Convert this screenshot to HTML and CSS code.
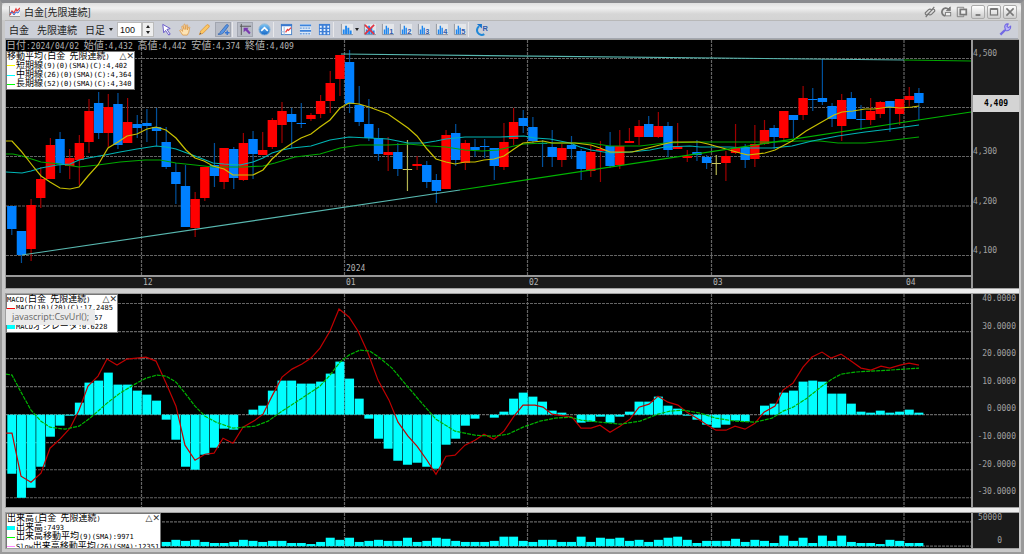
FILE: index.html
```html
<!DOCTYPE html>
<html lang="ja">
<head>
    <meta charset="UTF-8">
    <meta name="viewport" content="width=device-width, initial-scale=1.0">
    <title>白金[先限連続]</title>
    <link rel="stylesheet" href="styles.css">
</head>
<body>
    <!-- Shared icon shapes -->
    <svg class="defs" aria-hidden="true">
        <defs>
            <linearGradient id="blue" x1="0" y1="0" x2="0" y2="1">
                <stop offset="0" stop-color="#7cc4f4"/>
                <stop offset="1" stop-color="#1467c8"/>
            </linearGradient>
            <symbol id="bars" viewBox="0 0 14 14">
                <rect x="1" y="1" width="13" height="12" fill="#e4e6ea"/>
                <path d="M1.5 1v11.5H14" fill="none" stroke="#8a8f98"/>
                <path d="M3 12V7h2v5zM5.500 12V3h2v9zM8 12V5h2v7zM10.500 12V8h2v4z" fill="#1f86ee"/>
            </symbol>
            <symbol id="bars-left" viewBox="0 0 14 14">
                <rect x="1" y="1" width="13" height="12" fill="#e4e6ea"/>
                <path d="M1.5 1v11.5H14" fill="none" stroke="#8a8f98"/>
                <path d="M3 12V7h1.500v5zM5 12V3h1.500v9zM7 12V5h1.500v7z" fill="#1f86ee"/>
            </symbol>
        </defs>
    </svg>

    <div class="window">
        <header class="titlebar">
            <svg class="app-icon" viewBox="0 0 12 12">
                <rect x="1" y="0" width="11" height="11" fill="#f4f4f4"/>
                <path d="M1.5 0v10.500H12" fill="none" stroke="#999"/>
                <path d="M2 9l2-4 2 2 2-4 1 2 3-3" fill="none" stroke="#e23b3b" stroke-width="1.300"/>
                <path d="M2 7l2-1 2 3 2-3 2 1 2-3" fill="none" stroke="#3f72d8"/>
            </svg>
            <h1>白金[先限連続]</h1>
            <div class="title-tools">
                <button class="plain" aria-label="リンク">
                    <svg viewBox="0 0 14 14" fill="none" stroke="#777" stroke-width="1.400">
                        <path d="M6 8L3.500 10.500a2 2 0 0 1-2-2.500L5 4.500a3 3 0 0 1 4 0M8 6l2.500-2.500a2 2 0 0 1 2 2.500L9 9.500a3 3 0 0 1-4 0M2 13L12 1"/>
                    </svg>
                </button>
                <button class="plain" aria-label="更新">
                    <svg viewBox="0 0 14 14" fill="none" stroke="#777">
                        <path d="M6 11.500A4.500 4.500 0 1 1 10 4" stroke-width="2"/>
                        <path d="M12 1v4.500H7.500z" fill="#777"/>
                        <rect x="6.500" y="7.500" width="6" height="4" fill="#eee"/>
                    </svg>
                </button>
                <button class="plain" aria-label="複製">
                    <svg viewBox="0 0 14 14" fill="none" stroke="#777">
                        <path d="M9 3V1.500H1.500v11H9V11"/>
                        <rect x="5" y="4" width="7" height="6" stroke-width="2" fill="#eee"/>
                    </svg>
                </button>
                <button class="win" aria-label="最小化"><svg viewBox="0 0 10 10"><path d="M3 7.500h4" stroke="#777" stroke-width="1.500"/></svg></button>
                <button class="win" aria-label="最大化"><svg viewBox="0 0 10 10"><rect x="2" y="2.500" width="6" height="5" fill="none" stroke="#777"/><path d="M2 2.500h6" stroke="#777" stroke-width="1.600"/></svg></button>
                <button class="win" aria-label="閉じる"><svg viewBox="0 0 10 10"><path d="M2 2l6 6M8 2L2 8" stroke="#777" stroke-width="1.300"/></svg></button>
            </div>
        </header>

        <nav class="toolbar">
            <button class="menu">白金</button>
            <button class="menu">先限連続</button>
            <button class="menu period">日足<i class="caret"></i></button>
            <div class="count">
                <input type="text" value="100" aria-label="本数">
                <div class="spin">
                    <button aria-label="増やす"><i class="up"></i></button>
                    <button aria-label="減らす"><i class="caret"></i></button>
                </div>
            </div>
            <div class="group">
                <button class="tool" aria-label="選択"><svg viewBox="0 0 14 14"><path d="M3 1.500l8 4.500-3.500 1 3.500 5-1.500 1L6 8l-2 2.500z" fill="#fff" stroke="#6354c8"/></svg></button>
                <button class="tool" aria-label="移動"><svg viewBox="0 0 14 14"><path d="M4 13L1 8.500c-.5-1 .8-1.700 1.500-.8L4 9 3 4c0-1 1.200-1 1.500 0l1 3-.3-5c0-1 1.400-1 1.500 0l.6 5 .6-4.500c.2-1 1.500-.8 1.400.2L9 7.500l1.300-3c.5-.8 1.500-.3 1.200.6L10.500 10 9 13z" fill="#fde3b4" stroke="#dc9440" stroke-width=".8"/></svg></button>
                <button class="tool" aria-label="線"><svg viewBox="0 0 14 14"><path d="M1.500 12.500l1.500-4L9.500 2c1-1 3.500 1 2.500 2.300L5.500 11z" fill="#fbc764" stroke="#d99037" stroke-width=".8"/><path d="M1.500 12.500l1-2 1 1z" fill="#555"/></svg></button>
                <button class="tool on" aria-label="描画"><svg viewBox="0 0 14 14"><path d="M1 12c2.500 0 2-3 4-4l5-6c1-1 3 .3 2 1.700L7.500 10C6 12 3 13 1 12z" fill="#5a96e4" stroke="#2559a8" stroke-width=".7"/><path d="M11 8v5M8.500 10.500h5" stroke="#3475d4" stroke-width="1.500"/></svg></button>
            </div>
            <div class="group">
                <button class="tool on" aria-label="カーソル"><svg viewBox="0 0 14 14"><path d="M2.500 1v12M1 3.500h12" stroke="#555" fill="none"/><path d="M5 5h5.500L9 6.500l3.500 4-1.500 1.500-4-4L5 10z" fill="#7a3aae"/></svg></button>
                <button class="tool" aria-label="上へ"><svg viewBox="0 0 14 14"><circle cx="7" cy="7" r="6" fill="url(#blue)" stroke="#8ab5d8"/><path d="M3.500 8.500L7 5l3.500 3.500" fill="none" stroke="#fff" stroke-width="1.600"/></svg></button>
            </div>
            <div class="group">
                <button class="tool" aria-label="チャート"><svg viewBox="0 0 14 14"><rect x="1.500" y="1.500" width="11" height="11" fill="#fff" stroke="#4a83c8"/><path d="M1 2.500h12" stroke="#3878d0" stroke-width="2"/><path d="M6 10l2-3 1 1 3-3" stroke="#e84040" fill="none" stroke-width="1.400"/><path d="M1 9.500h4M4.500 4v9" stroke="#9ab7dc" fill="none"/></svg></button>
                <button class="tool" aria-label="一覧"><svg viewBox="0 0 14 14"><path d="M1 1h12v12H1z" fill="#dce8f6"/><path d="M1 2.500h12M1 8.500h12" stroke="#3d83dc" stroke-width="2"/><path d="M1 5.500h12M1 11.500h12" stroke="#6f9fdc" stroke-width="1.500" stroke-dasharray="2 1"/></svg></button>
                <button class="tool" aria-label="表"><svg viewBox="0 0 14 14"><path d="M1 1h12v12H1z" fill="#3d7fd6"/><path d="M2 3h2v2H2zM6 3h2v2H6zM10 3h2v2h-2zM2 6.500h2v2H2zM6 6.500h2v2H6zM10 6.500h2v2h-2zM2 10h2v2H2zM6 10h2v2H6zM10 10h2v2h-2z" fill="#e8f2ff"/></svg></button>
            </div>
            <div class="group studies">
                <button class="tool" aria-label="指標"><svg><use href="#bars"/></svg></button>
                <button class="drop" aria-label="指標メニュー"><i class="caret"></i></button>
                <button class="tool" aria-label="指標削除"><svg viewBox="0 0 14 14"><use href="#bars" width="14" height="14"/><path d="M2 2l10 10M12 2L2 12" stroke="#e33442" stroke-width="1.800"/></svg></button>
                <button class="tool"><svg viewBox="0 0 14 14"><use href="#bars-left" width="14" height="14"/><text x="9" y="12">1</text></svg></button>
                <button class="tool"><svg viewBox="0 0 14 14"><use href="#bars-left" width="14" height="14"/><text x="9" y="12">2</text></svg></button>
                <button class="tool"><svg viewBox="0 0 14 14"><use href="#bars-left" width="14" height="14"/><text x="9" y="12">3</text></svg></button>
                <button class="tool"><svg viewBox="0 0 14 14"><use href="#bars-left" width="14" height="14"/><text x="9" y="12">4</text></svg></button>
                <button class="tool"><svg viewBox="0 0 14 14"><use href="#bars-left" width="14" height="14"/><text x="9" y="12">5</text></svg></button>
            </div>
            <div class="group">
                <button class="tool" aria-label="リセット"><svg viewBox="0 0 14 14"><path d="M4.500 3.500a5 5 0 1 0 5.500 8.500" fill="none" stroke="#2088d8" stroke-width="2.200"/><path d="M2 1h5.500v5z" fill="#1674cc"/><text x="8" y="9">R</text></svg></button>
            </div>
            <button class="tool settings" aria-label="設定"><svg viewBox="0 0 14 14"><path d="M12.500 3.500L10 5 8.500 3.500 10 1C7 .5 5.500 3 6.500 5.500L7 8c3 1 6-1 5.500-4.500z" fill="#b9b4f8" stroke="#7268e4" stroke-width="1.200"/><path d="M1.500 12.500l5-5" stroke="#7268e4" stroke-width="2.400"/></svg></button>
        </nav>

        <main class="charts">
            <section class="panel price">
                <div class="plot">
                    <svg id="price" viewBox="6 40 965 235" preserveAspectRatio="none"></svg>
                    <p class="quote"><b>日付</b>:2024/04/02 <b>始値</b>:4,432 <b>高値</b>:4,442 <b>安値</b>:4,374 <b>終値</b>:4,409</p>
                    <div class="legend ma">
                        <div><span><b>移動平均</b>(<b>白金</b> <b>先限連続</b>)</span><span class="marks">△✕</span></div>
                        <div><i class="key yellow"></i><span><b>短期線</b>(9)(0)(SMA)(C):4,402</span></div>
                        <div><i class="key cyan"></i><span><b>中期線</b>(26)(0)(SMA)(C):4,364</span></div>
                        <div><i class="key green"></i><span><b>長期線</b>(52)(0)(SMA)(C):4,340</span></div>
                    </div>
                    <div class="months year"><span></span><span></span><span>2024</span></div>
                </div>
                <div class="months dates"><span></span><span>12</span><span>01</span><span>02</span><span>03</span><span>04</span></div>
                <div class="axis prices">
                    <span>4,500</span>
                    <span class="last">4,409</span>
                    <span>4,300</span>
                    <span>4,200</span>
                    <span>4,100</span>
                </div>
            </section>

            <section class="panel macd">
                <div class="plot">
                    <svg id="macd" viewBox="6 294 965 213" preserveAspectRatio="none"></svg>
                    <div class="legend osc">
                        <div><span>MACD(<b>白金</b> <b>先限連続</b>)</span><span class="marks">△✕</span></div>
                        <div><i class="key red"></i><span>MACD(10)(20)(C):17.2485</span></div>
                        <div class="signal">57</div>
                        <div><i class="key block"></i><span>MACD<b>オシレータ</b>:0.6228</span></div>
                    </div>
                    <div class="tip">javascript:CsvUrl();</div>
                </div>
                <div class="axis values">
                    <span>40.0000</span>
                    <span>30.0000</span>
                    <span>20.0000</span>
                    <span>10.0000</span>
                    <span>0.0000</span>
                    <span>-10.0000</span>
                    <span>-20.0000</span>
                    <span>-30.0000</span>
                </div>
            </section>

            <section class="panel volume">
                <div class="plot">
                    <svg id="volume" viewBox="6 514 965 33" preserveAspectRatio="none"></svg>
                    <div class="legend vol">
                        <div><span><b>出来高</b>(<b>白金</b> <b>先限連続</b>)</span><span class="marks">△✕</span></div>
                        <div><i class="key block"></i><span><b>出来高</b>:7493</span></div>
                        <div><i class="key green"></i><span><b>出来高移動平均</b>(9)(SMA):9971</span></div>
                        <div><i class="key pink"></i><span>Slow<b>出来高移動平均</b>(26)(SMA):12351</span></div>
                    </div>
                </div>
                <div class="axis volumes">
                    <span>50000</span>
                    <span>0</span>
                </div>
            </section>
        </main>
    </div>
    <script src="chart.js"></script>
</body>
</html>
```
FILE: styles.css
```css
/* General */
* {
    box-sizing: border-box;
}
body {
    margin: 0;
    background: #b4b4b4;
    font-family: "Noto Sans CJK JP", sans-serif;
    font-size: 10px;
    color: #222;
}
h1, p {
    margin: 0;
    font-weight: normal;
}
button {
    padding: 0;
    border: 0;
    background: none;
    font: inherit;
    color: inherit;
    cursor: pointer;
}
svg {
    display: block;
}
.defs {
    position: absolute;
    width: 0;
    height: 0;
}
.window {
    display: flex;
    flex-direction: column;
    height: 100vh;
    min-height: 400px;
    border: solid #9a9a9a;
    border-width: 3px 3px 2px 2px;
    border-top-color: #8a8b8f;
    background: #c8c8c8;
}

/* Title bar */
.titlebar {
    display: flex;
    align-items: center;
    height: 17px;
    padding: 0 4px 0 6px;
    background: linear-gradient(#e0e0e0, #f0f0f0 30%, #d6d6d6 65%, #d4d4d4);
    border-radius: 4px 4px 0 0;
}
.app-icon {
    width: 12px;
    height: 12px;
}
.titlebar h1 {
    margin-left: 4px;
    font-size: 10px;
    line-height: 16px;
}
.title-tools {
    display: flex;
    align-items: center;
    gap: 2px;
    margin-left: auto;
}
.plain svg {
    width: 14px;
    height: 12px;
}
.win {
    width: 14px;
    height: 14px;
    border: 1px solid #aaa;
    border-radius: 2px;
    background: linear-gradient(#fff, #ccc);
}
.win svg {
    width: 12px;
    height: 12px;
}

/* Toolbar */
.toolbar {
    display: flex;
    align-items: center;
    height: 19px;
    margin: 0 3px;
    padding: 0 4px;
    border-top: 1px solid #b8b8b8;
    border-bottom: 1px solid #a4a8b0;
    background: #cdd0d8;
}
.menu {
    margin-right: 8px;
    font-size: 10px;
    line-height: 16px;
}
.period {
    display: flex;
    align-items: center;
    gap: 4px;
    margin-right: 4px;
}
.caret, .up {
    border: solid transparent;
    border-width: 0 2px;
    border-top: 3px solid #222;
}
.up {
    border-top: 0;
    border-bottom: 3px solid #222;
}
.count {
    display: flex;
    height: 15px;
    margin-right: 3px;
}
.count input {
    width: 25px;
    padding: 0 2px;
    border: 1px solid #bbb;
    background: #fff;
    font: 9px "Liberation Sans", sans-serif;
    color: #111;
}
.spin {
    display: flex;
    flex-direction: column;
    width: 12px;
    border: 1px solid #bbb;
    background: #eee;
}
.spin button {
    display: flex;
    flex: 1;
    align-items: center;
    justify-content: center;
}
.group {
    display: flex;
    gap: 1px;
}
.group + .group {
    padding-left: 3px;
    border-left: 1px solid #e8e8ea;
}
.studies {
    gap: 0;
}
.tool {
    display: flex;
    align-items: center;
    justify-content: center;
    width: 18px;
    height: 15px;
}
.tool.on {
    width: 16px;
    margin: 0 1px;
    border: 1px solid #a2a6b0;
    background: #b8bcc6;
}
.tool svg {
    width: 13px;
    height: 13px;
}
.tool text {
    font: bold 8px "Liberation Sans", sans-serif;
    fill: #2f5cae;
}
.drop {
    display: flex;
    align-items: center;
    width: 5px;
}
.settings {
    margin-left: auto;
}

/* Chart panels */
.charts {
    display: flex;
    flex: 1;
    flex-direction: column;
    gap: 4px;
    min-height: 0;
    margin: 0 2px 3px 3px;
    background: linear-gradient(90deg, #ccc, #eee);
}
.panel {
    display: grid;
    grid-template-columns: minmax(0, 1fr) 48px;
    min-height: 0;
    border: solid #a0a0a0;
    border-width: 1px 0 1px 1px;
    background: #1a1a1a;
}
.price {
    flex: 250 1 0;
    grid-template-rows: minmax(0, 1fr) 13px;
}
.macd {
    flex: 215 1 0;
}
.volume {
    flex: 35 1 0;
}
.plot {
    position: relative;
    min-width: 0;
    min-height: 0;
    overflow: hidden;
    background: #000;
}
.plot svg {
    width: 100%;
    height: 100%;
}
.quote, .legend, .axis, .months {
    font-family: "DejaVu Sans Mono", "Noto Sans CJK JP", monospace;
    font-size: 8px;
}
.quote b, .legend b {
    font-family: "Noto Sans CJK JP", sans-serif;
    font-weight: normal;
}
.quote {
    position: absolute;
    top: 0;
    left: 0;
    line-height: 12px;
    color: #b4b4b4;
    white-space: pre;
}
.quote b {
    font-size: 10px;
    line-height: 10px;
}

/* Legends */
.legend {
    position: absolute;
    top: 0;
    left: 0;
    display: flex;
    flex-direction: column;
    height: 39px;
    border: 1px solid #777;
    background: #fff;
    font-size: 7px;
    line-height: 9px;
    color: #000;
    white-space: pre;
}
.legend div {
    display: flex;
    flex: 1;
    align-items: center;
    min-height: 0;
}
.legend b {
    font-size: 9px;
    line-height: 8px;
}
.legend .marks {
    margin-left: auto;
    font: 9px/9px "DejaVu Sans", sans-serif;
    color: #333;
}
.legend.ma {
    top: 11px;
    width: 129px;
}
.osc {
    width: 112px;
}
.vol {
    width: 155px;
}
.key {
    flex: none;
    width: 8px;
    height: 1px;
    margin-right: 1px;
}
.yellow { background: #ff0; }
.cyan { background: #0ff; }
.green { background: #0f0; }
.red { background: #f00; }
.pink { background: #f8f; }
.block {
    height: 4px;
    background: #0ff;
}
.legend .signal {
    padding-left: 87px;
}
.tip {
    position: absolute;
    top: 15px;
    left: 0;
    height: 16px;
    padding: 0 6px;
    border-radius: 0 3px 0 0;
    background: #ebebeb;
    font: 9px/16px "Open Sans", sans-serif;
    color: #666;
}

/* Axes */
.axis {
    grid-column: 2;
    grid-row: 1;
    border-left: 2px solid #999;
    line-height: 10px;
    color: #a0a0a0;
}
.prices {
    display: grid;
    grid-row: 1 / 3;
    grid-template-rows: 49fr 49fr 49fr 49fr 45fr;
    padding-top: 6px;
}
.prices span {
    padding-top: 3px;
}
.prices .last {
    height: 17px;
    padding: 0;
    background: #d4d4d4;
    line-height: 17px;
    font-weight: bold;
    text-align: center;
    color: #000;
}
.values, .volumes {
    display: flex;
    flex-direction: column;
    justify-content: space-between;
    text-align: right;
}
.values {
    padding: 0 3px 10px 0;
}
.volumes {
    padding: 0 17px 2px 0;
}
.months {
    display: grid;
    grid-template-columns: 136fr 203fr 183fr 184fr 193fr 66fr;
    line-height: 11px;
    color: #b4b4b4;
}
.months span {
    padding-left: 1px;
}
.dates {
    border-top: 2px solid #999;
}
.year {
    position: absolute;
    right: 0;
    bottom: 1px;
    left: 0;
}
```
FILE: chart.js
```js
const NS = 'http://www.w3.org/2000/svg';
const START = 11.8;
const STEP = 9.65;
const MONTHS = [141.5, 344.5, 527.5, 711.5, 904];

const COLORS = {
    R: ['#ff0000', '#a00000'],
    B: ['#0080ff', '#00509c'],
    Y: ['#c8c860', '#b4b450']
};

// direction, body top, body bottom, wick top, wick bottom
const candles = `
B 206 229 206 235|B 231 255 231 263|R 205 249 199 261|R 179 198 167 208|R 145 179 138 179
B 139 164 132 173|R 158 166 149 179|R 143 160 135 185|R 111 142 99 153|B 103 133 92 139
R 107 133 94 147|B 104 145 93 149|R 122 143 98 143|B 124 128 115 138|B 123 126 109 142
B 127 131 108 146|B 142 167 127 169|B 172 184 163 204|B 186 227 165 227|R 199 228 192 237
R 167 198 167 201|B 165 176 143 187|R 148 182 148 189|B 149 178 147 189|R 143 180 133 181
B 139 154 131 179|R 150 155 132 155|R 120 147 118 149|R 111 125 102 143|B 114 122 108 148
B 123 124 103 128|R 115 119 113 121|R 101 114 95 118|R 83 101 71 113|R 55 79 55 96
B 62 104 50 113|B 105 122 86 126|B 124 138 99 141|B 138 154 128 161|R 152 155 137 171
B 152 169 143 176|Y 169 170 140 191|R 164 166 156 170|B 165 182 161 188|B 180 191 174 203
R 135 189 130 189|B 133 160 124 166|R 143 163 140 170|B 147 150 139 157|B 146 147 139 158
B 148 166 148 180|R 142 167 123 170|R 122 139 108 145|B 118 126 110 133|B 127 141 117 143
B 143 144 140 167|B 147 157 130 167|R 148 160 144 167|B 145 149 136 159|B 151 169 149 180
R 152 171 145 177|R 149 151 141 182|B 146 166 132 168|R 146 165 130 169|R 141 143 128 143
R 126 137 120 145|B 124 137 116 137|R 126 137 112 138|B 126 150 122 157|R 146 149 123 149
R 156 158 150 162|B 152 155 140 161|B 157 163 155 169|Y 163 164 155 175|R 156 163 151 181
R 148 153 124 154|B 147 160 144 168|R 144 159 125 167|R 130 144 120 145|B 128 137 125 149
R 111 138 111 142|B 115 120 115 138|R 98 115 86 120|B 99 100 88 111|B 98 102 59 105
B 106 119 103 127|R 100 126 94 141|B 98 119 92 119|B 119 120 105 130|R 111 120 98 125
R 102 114 101 118|B 101 108 101 132|R 99 114 99 125|R 96 100 87 106|B 93 103 88 120
`.trim().split(/[|\n]/).map(row => row.split(' '));

const shortMA = '6,141 12,141 21,151 32,165 41,176 50,182 60,188 70,189 79,187 88,176 98,165 108,148 118,142 127,136 137,134 147,129 156,127 166,130 176,138 186,150 195,158 204,161 213,166 224,169 233,175 253,175 263,170 272,159 282,150 291,144 301,138 311,134 320,127 330,120 340,108 349,103 359,104 369,107 388,114 398,121 408,128 417,136 427,149 436,159 446,162 455,164 465,162 475,162 484,160 494,159 504,156 514,149 523,143 533,142 543,141 552,143 575,143 591,145 600,148 610,152 632,152 648,148 660,145 673,142 699,142 708,144 726,149 740,153 748,155 765,153 775,150 792,141 806,131 820,123 834,115 842,112 853,111 865,109 874,109 889,107 900,108 912,107 919,106';
const middleMA = '6,172 22,173 31,171 41,168 57,165 70,164 79,160 88,158 105,155 120,152 137,149 156,146 166,147 176,149 195,156 213,163 224,164 240,165 253,162 263,158 272,153 282,150 292,148 311,146 330,140 349,137 369,138 388,139 408,143 424,143 436,141 446,139 465,137 500,137 524,136 535,138 550,139 570,143 580,147 591,150 610,153 630,152 650,150 665,147 690,146 700,147 730,147 745,148 772,148 792,146 812,141 838,136 865,132 890,129 919,125';
const longMA = '6,154 13,154 22,156 41,162 60,164 79,167 98,165 120,162 145,160 160,160 176,163 195,165 213,167 243,167 263,166 275,163 295,157 320,154 340,148 360,145 388,145 408,144 430,146 446,147 465,150 482,151 498,150 514,146 524,144 545,143 590,143 610,146 640,146 665,143 699,142 775,142 800,141 820,141 838,143 865,143 885,141 919,137';

const oscillator = [
    -59, -83, -73, -52, -22, -11, -1, 12, 32, 34, 42, 30, 30, 24, 20, 14, -5, -25, -52, -55,
    -40, -33, -14, -15, 0, 5, 9, 24, 34, 34, 31, 31, 33, 41, 53, 36, 16, -4, -24, -34,
    -46, -50, -48, -52, -54, -30, -24, -11, -4, 0, -3, 3, 16, 22, 18, 13, 4, 2, 0, -8,
    -7, -2, -8, -2, 3, 13, 13, 18, 9, 6, -1, -5, -10, -13, -10, -6, -7, 0, 9, 11,
    22, 24, 33, 34, 33, 21, 21, 11, 3, 2, 4, 2, 3, 5, 2
];
const macdLine = '6,433 12,433 21,476 31,482 41,473 50,448 60,439 70,428 79,410 88,386 98,376 107,359 117,365 127,359 146,357 156,361 166,383 176,406 185,445 195,460 205,454 214,453 223,438 233,443 243,427 255,420 263,414 272,396 282,377 292,369 302,364 311,358 320,348 330,331 339,309 349,317 358,331 368,353 378,380 389,400 398,422 408,436 417,446 427,460 436,474 446,456 455,455 465,445 475,440 484,434 494,439 504,431 514,416 523,405 535,405 543,407 552,414 572,417 581,428 591,428 600,425 610,432 620,426 630,419 639,407 649,404 658,396 668,402 678,405 687,412 697,418 706,424 716,430 726,430 735,426 745,429 755,423 764,412 775,406 783,390 793,383 803,367 812,357 822,352 831,358 841,354 851,361 861,368 871,370 881,366 890,368 900,365 909,363 919,365';
const signalLine = '6,374 12,375 21,392 31,410 41,421 50,427 65,429 79,426 90,418 107,403 120,393 135,384 146,378 157,375 166,376 176,382 185,393 195,406 205,416 216,422 233,428 255,426 268,421 282,411 302,398 320,386 330,375 340,362 349,355 360,350 370,351 380,358 392,368 408,387 421,402 436,419 455,431 475,435 494,436 508,434 523,427 540,421 555,418 570,417 581,420 600,422 620,424 640,421 658,414 670,411 684,410 700,413 716,418 735,421 755,422 772,418 783,411 793,407 807,398 822,386 832,379 841,374 855,372 870,371 890,370 919,368';

const volumes = [
    5, 6, 5, 6, 4, 5, 5, 4, 6, 6, 5, 7, 4, 5, 4, 5, 4, 6, 5, 6,
    4, 3, 3, 4, 6, 5, 4, 5, 5, 3, 3, 2, 4, 8, 6, 8, 4, 5, 6, 5,
    5, 8, 4, 5, 8, 7, 5, 4, 4, 4, 5, 9, 9, 5, 4, 6, 6, 4, 4, 9,
    4, 8, 7, 8, 5, 6, 4, 6, 8, 9, 6, 3, 5, 5, 5, 7, 4, 6, 5, 3,
    10, 5, 8, 3, 10, 5, 10, 4, 3, 3, 2, 6, 5, 3, 3
];

function add(svg, name, attrs) {
    const el = document.createElementNS(NS, name);
    for (const key in attrs) el.setAttribute(key, attrs[key]);
    svg.appendChild(el);
}

function line(svg, points, color, dash) {
    add(svg, 'polyline', {
        points, fill: 'none', stroke: color, 'stroke-width': 1.2,
        'stroke-dasharray': dash || 'none', 'vector-effect': 'non-scaling-stroke'
    });
}

function grid(svg, rows, top, bottom) {
    rows.forEach(y => line(svg, `6,${y} 971,${y}`, '#646464', '3 1'));
    MONTHS.forEach(x => line(svg, `${x},${top} ${x},${bottom}`, '#646464', '3 1'));
}

function bars(svg, values, base) {
    values.forEach((v, i) => {
        if (!v) return;
        add(svg, 'rect', {
            x: START + STEP * i - 4.5, y: v > 0 ? base - v : base,
            width: 9, height: Math.abs(v), fill: '#00ffff'
        });
    });
}

// Price
const price = document.getElementById('price');
grid(price, [58.5, 107.5, 156.5, 206, 255.5], 40, 275);
candles.forEach(([dir, top, bottom, high, low], i) => {
    const x = START + STEP * i;
    const [body, wick] = COLORS[dir];
    add(price, 'rect', { x: x - 0.6, y: high, width: 1.2, height: low - high, fill: wick });
    add(price, 'rect', { x: x - 4.7, y: top, width: 9.4, height: bottom - top, fill: body });
});
line(price, longMA, '#00a800');
line(price, middleMA, '#00b4b4');
line(price, shortMA, '#c8c000');
line(price, '22,255 460,190', '#58b8b0');
line(price, '460,190 971,112', '#00b400');
line(price, '341,54 904,60', '#58b8b0');
line(price, '904,60 971,61', '#00a800');

// MACD
const macd = document.getElementById('macd');
grid(macd, [303.5, 331.5, 358.5, 386.5, 414.5, 442.5, 469.5, 497.5], 294, 507);
bars(macd, oscillator, 414.5);
line(macd, macdLine, '#c00000');
line(macd, signalLine, '#00b400', '4 1');

// Volume
const volume = document.getElementById('volume');
grid(volume, [522.5, 545.5], 514, 547);
bars(volume, volumes, 545.5);
```
